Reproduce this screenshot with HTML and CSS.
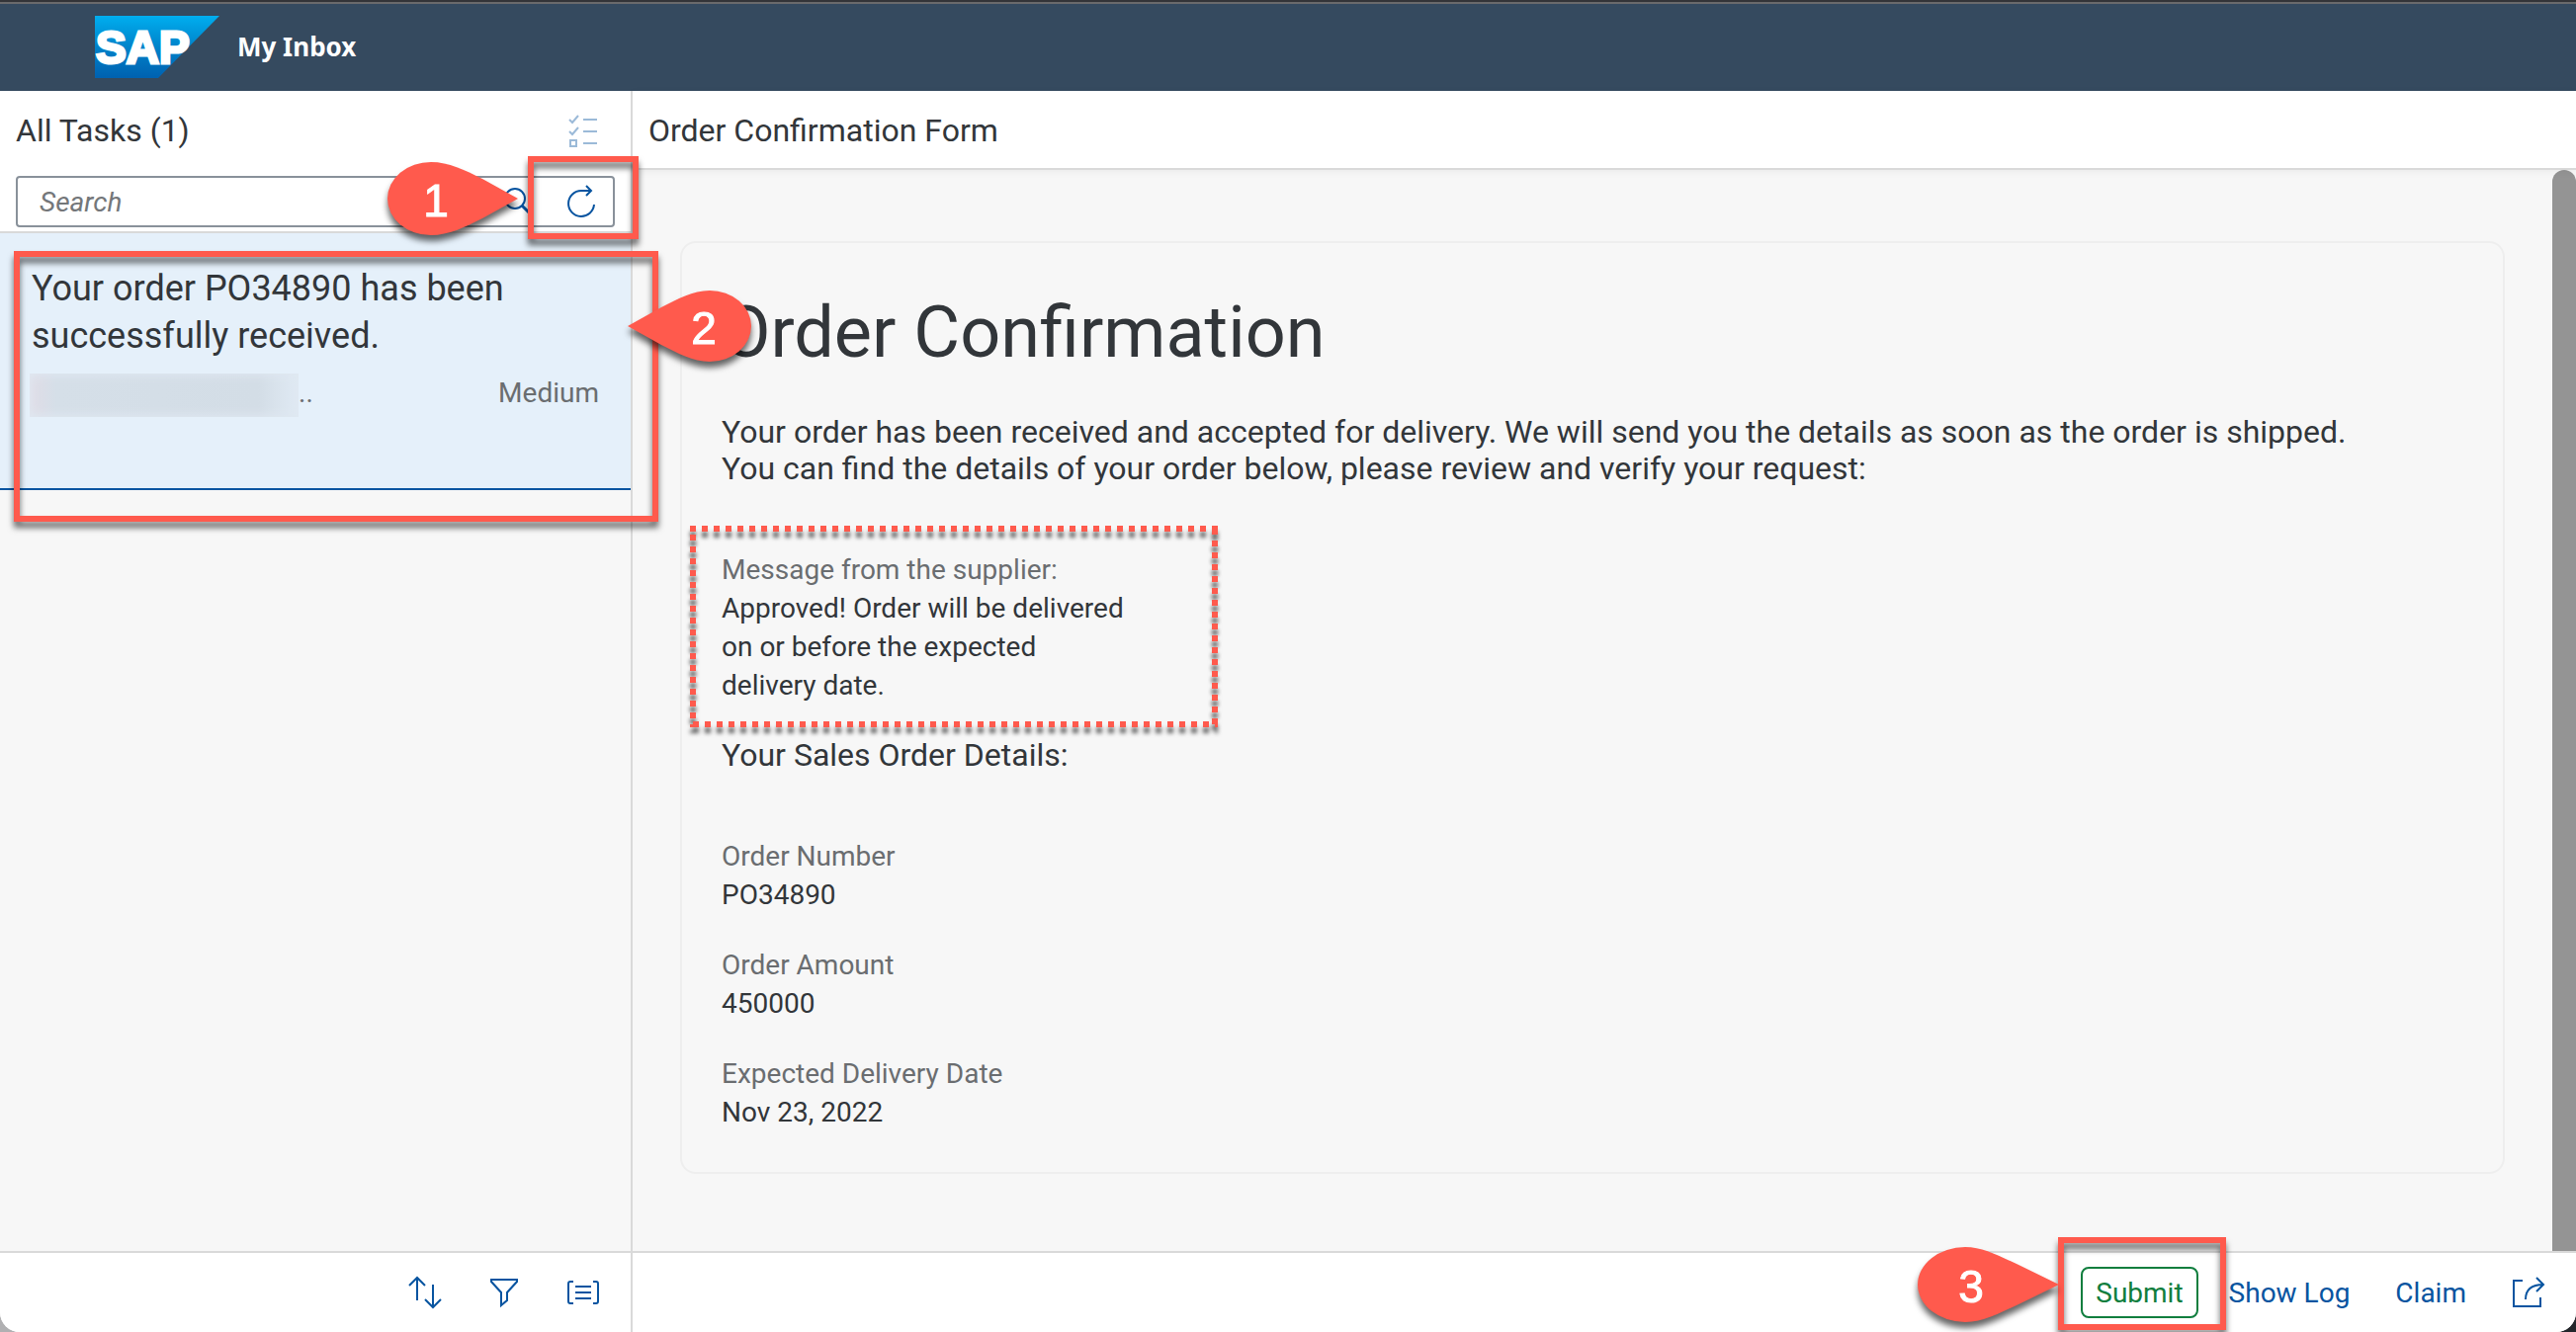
FILE: index.html
```html
<!DOCTYPE html>
<html lang="en">
<head>
<meta charset="utf-8">
<meta name="viewport" content="width=device-width, initial-scale=1">
<title>My Inbox</title>
<link rel="stylesheet" href="styles.css">
</head>
<body>
<div class="app">
  <header class="shell">
    <svg class="logo" viewBox="0 0 126 63" role="img" aria-label="SAP">
      <defs>
        <linearGradient id="logo-fill" x1="0" y1="0" x2="0" y2="1">
          <stop offset="0" stop-color="#00aeef"/>
          <stop offset="0.5" stop-color="#0083ca"/>
          <stop offset="1" stop-color="#0061b0"/>
        </linearGradient>
      </defs>
      <path d="M0 0H126L64 63H0Z" fill="url(#logo-fill)"/>
      <text class="logo-text" x="1" y="48">SAP</text>
    </svg>
    <h1 class="shell-title">My Inbox</h1>
  </header>

  <div class="panes">
    <aside class="list-pane">
      <div class="list-head">
        <h2 class="pane-title">All Tasks (1)</h2>
        <button class="icon-btn" type="button" aria-label="Select multiple" disabled>
          <svg class="icon" width="32" height="32" viewBox="0 0 32 32">
            <path d="M2 5l3 3 6-7M2 17l3 3 6-7M16 5h14M16 17h14M16 29h14M3 26h6v6H3z"/>
          </svg>
        </button>
      </div>
      <div class="search-bar">
        <div class="search-field">
          <input class="search-input" type="search" placeholder="Search" aria-label="Search">
          <button class="field-btn" type="button" aria-label="Search tasks">
            <svg class="icon" width="32" height="32" viewBox="0 0 32 32">
              <circle cx="13" cy="13" r="10"/><path d="M20 20l9 9" stroke-width="3"/>
            </svg>
          </button>
          <button class="field-btn" type="button" aria-label="Refresh">
            <svg class="icon" width="32" height="32" viewBox="0 0 32 32">
              <path d="M29 19A13 13 0 1 1 16 5H26M21 0l5 5-5 5"/>
            </svg>
          </button>
          <div class="mark mark-refresh"></div>
          <svg class="pin pin-one" width="132" height="74" viewBox="0 0 132 74">
            <path d="M44 0C62 0 78 8 96 17L132 37L96 57C78 66 62 74 44 74A44 37 0 0 1 44 0Z"/>
            <text x="49" y="55">1</text>
          </svg>
        </div>
      </div>
      <ul class="tasks">
        <li class="task">
          <h3 class="task-title">Your order PO34890 has been successfully received.</h3>
          <div class="task-meta">
            <span class="task-owner"><span class="redacted"></span>..</span>
            <span>Medium</span>
          </div>
          <div class="mark mark-task"></div>
          <svg class="pin pin-two" width="125" height="72" viewBox="0 0 125 72">
            <path d="M83 0C66 0 50 9 34 17L0 36L34 55C50 63 66 72 83 72A42 36 0 0 0 83 0Z"/>
            <text x="77" y="54">2</text>
          </svg>
        </li>
      </ul>
      <footer class="bar">
        <button class="icon-btn" type="button" aria-label="Sort">
          <svg class="icon" width="32" height="32" viewBox="0 0 32 32">
            <path d="M8 24V1M0 9l8-8 8 8M24 8v23M16 23l8 8 8-8"/>
          </svg>
        </button>
        <button class="icon-btn" type="button" aria-label="Filter">
          <svg class="icon" width="32" height="32" viewBox="0 0 32 32">
            <path d="M3 3H29V5L19 16V24L13 29V16L3 5Z"/>
          </svg>
        </button>
        <button class="icon-btn" type="button" aria-label="Group">
          <svg class="icon" width="34" height="32" viewBox="0 0 34 32">
            <path d="M7 5H4Q2 5 2 7V25Q2 27 4 27H7M27 5H30Q32 5 32 7V25Q32 27 30 27H27M9 10H25M9 16H25M9 22H25"/>
          </svg>
        </button>
      </footer>
    </aside>

    <main class="detail-pane">
      <div class="detail-head"><h2 class="pane-title">Order Confirmation Form</h2></div>
      <div class="detail-body">
        <section class="card">
          <h2 class="card-title">Order Confirmation</h2>
          <p class="intro">Your order has been received and accepted for delivery. We will send you the details as soon as the order is shipped.<br>You can find the details of your order below, please review and verify your request:</p>
          <div class="message">
            <dl>
              <dt>Message from the supplier:</dt>
              <dd>Approved! Order will be delivered on or before the expected delivery date.</dd>
            </dl>
            <svg class="dotted" width="534" height="204" viewBox="0 0 534 204">
              <path d="M0 3H534M3 9V204M531 3V204M3 201H534"/>
            </svg>
          </div>
          <h3 class="section-title">Your Sales Order Details:</h3>
          <dl class="fields">
            <div><dt>Order Number</dt><dd>PO34890</dd></div>
            <div><dt>Order Amount</dt><dd>450000</dd></div>
            <div><dt>Expected Delivery Date</dt><dd>Nov 23, 2022</dd></div>
          </dl>
        </section>
        <div class="scroll-track"><div class="scroll-thumb"></div></div>
      </div>
      <footer class="bar">
        <div class="submit-wrap">
          <button class="btn btn-accept" type="button">Submit</button>
          <div class="mark mark-submit"></div>
          <svg class="pin pin-three" width="143" height="76" viewBox="0 0 143 76">
            <path d="M48 0C66 0 82 9 100 17L143 38L100 59C82 67 66 76 48 76A48 38 0 0 1 48 0Z"/>
            <text x="54" y="56">3</text>
          </svg>
        </div>
        <button class="btn" type="button">Show Log</button>
        <button class="btn" type="button">Claim</button>
        <button class="icon-btn" type="button" aria-label="Share">
          <svg class="icon" width="34" height="32" viewBox="0 0 34 32">
            <path d="M11 4H2V30H29V21M14 23C14 12 21 8 32 8M25 1l7 7-7 7"/>
          </svg>
        </button>
      </footer>
    </main>
  </div>
</div>
</body>
</html>
```
FILE: styles.css
```css
* { box-sizing: border-box; }

body {
  margin: 0;
  background: linear-gradient(to right, #b0b0b2 50%, #23262b 50%);
  color: #32363a;
  font-family: Roboto, "Liberation Sans", sans-serif;
  font-size: 28px;
  line-height: 39px;
}

h1, h2, h3, p, dl, dd, ul { margin: 0; padding: 0; font-weight: 400; }
ul { list-style: none; }
button, input { font: inherit; color: inherit; background: none; border: 0; margin: 0; padding: 0; }

.app {
  display: flex;
  flex-direction: column;
  min-height: 100vh;
  border-radius: 0 0 20px 20px;
  background: #f7f7f7;
  overflow: hidden;
}

.shell {
  display: flex;
  align-items: center;
  gap: 18px;
  height: 92px;
  padding: 0 96px;
  border-top: 2px solid #333438;
  background: #354a5f;
  box-shadow: inset 0 2px #6a6a6c;
}
.logo { width: 126px; height: 63px; }
.logo-text {
  font: bold 46px "Liberation Sans", sans-serif;
  fill: #fff;
  stroke: #fff;
  stroke-width: 3px;
}
.shell-title {
  color: #fff;
  font-family: "Noto Sans", sans-serif;
  font-size: 26px;
  font-weight: 700;
}

.panes { flex: 1; display: flex; }

.list-pane {
  position: relative;
  z-index: 1;
  flex: 0 0 640px;
  display: flex;
  flex-direction: column;
  border-right: 2px solid #d9d9d9;
}
.list-head {
  display: flex;
  align-items: center;
  justify-content: space-between;
  height: 80px;
  padding: 0 16px;
  background: #fff;
}
.pane-title { font-size: 32px; line-height: 40px; }

.search-bar {
  position: relative;
  z-index: 1;
  padding: 6px 16px 4px;
  border-bottom: 2px solid #d9d9d9;
  background: #fff;
}
.search-field {
  position: relative;
  display: flex;
  height: 52px;
  border: 2px solid #89919a;
  border-radius: 4px;
}
.search-input { flex: 1; min-width: 0; padding: 0 22px; outline: 0; }
.search-input::placeholder { color: #74777a; font-style: italic; opacity: 1; }
.field-btn {
  display: grid;
  place-items: center;
  width: 64px;
}

.icon { fill: none; stroke: #0854a0; stroke-width: 2px; overflow: visible; }
.icon-btn {
  display: grid;
  place-items: center;
  width: 64px;
  height: 52px;
}
.icon-btn:disabled { opacity: 0.4; }

.tasks { flex: 1; }
.task {
  position: relative;
  min-height: 260px;
  padding: 32px 32px 0;
  border-bottom: 2px solid #0854a0;
  background: #e5f0fa;
}
.task-title { font-size: 36px; line-height: 48px; }
.task-meta {
  display: flex;
  justify-content: space-between;
  margin-top: 14px;
  color: #6a6d70;
}
.task-owner { display: flex; margin-left: -2px; }
.redacted {
  width: 272px;
  height: 44px;
  background: linear-gradient(to right, #e0dce6, #d5dfe8 10%, #d3dde6 85%, #e0eaf4);
  box-shadow: inset 0 0 10px 2px #dfe8f1;
}

.bar {
  display: flex;
  align-items: center;
  justify-content: flex-end;
  gap: 16px;
  height: 82px;
  padding: 0 16px;
  border-top: 2px solid #d9d9d9;
  background: #fff;
}

.detail-pane { flex: 1; min-width: 0; display: flex; flex-direction: column; }
.detail-head {
  position: relative;
  display: flex;
  align-items: center;
  height: 80px;
  padding: 2px 16px 0;
  border-bottom: 2px solid #d9d9d9;
  background: #fff;
  box-shadow: 0 2px 8px rgba(0, 0, 0, 0.05);
}
.detail-body { flex: 1; display: flex; align-items: flex-start; }
.card {
  flex: 1;
  margin: 72px 48px;
  padding: 47px 40px 41px;
  border: 2px solid #eee;
  border-radius: 16px;
}
.card-title { font-size: 72px; line-height: 88px; }
.intro { margin-top: 38px; font-size: 32px; line-height: 37px; }

dt { color: #6a6d70; }
.message { position: relative; margin-top: 64px; }
.message dd { max-width: 416px; }
.section-title { margin-top: 32px; font-size: 32px; line-height: 38px; }
.fields { display: grid; gap: 32px; margin-top: 64px; }

.scroll-track { align-self: stretch; width: 24px; display: flex; }
.scroll-thumb { flex: 1; border-radius: 12px 12px 0 0; background: #949494; }

.btn {
  height: 52px;
  padding: 0 13px;
  border: 2px solid transparent;
  border-radius: 8px;
  color: #0854a0;
}
.btn-accept { border-color: #107e3e; color: #107e3e; }
.submit-wrap { position: relative; }

/* Callouts laid over the page */
.mark {
  position: absolute;
  border: 6px solid #ff5a4d;
  filter: drop-shadow(0 6px 3px rgba(0, 0, 0, 0.6));
  pointer-events: none;
}
.mark-refresh { top: -22px; right: -26px; width: 112px; height: 84px; }
.mark-task { top: 18px; left: 14px; right: -28px; height: 274px; }
.mark-submit { top: -30px; right: -28px; width: 170px; height: 94px; }

.pin {
  position: absolute;
  fill: #ff5a4d;
  overflow: visible;
  filter: drop-shadow(0 6px 3px rgba(0, 0, 0, 0.6));
  pointer-events: none;
}
.pin text {
  font: 46px "Liberation Sans", sans-serif;
  fill: #fff;
  stroke: #fff;
  stroke-width: 1px;
  text-anchor: middle;
}
.pin-one { top: -16px; right: 96px; }
.pin-two { top: 58px; right: -122px; }
.pin-three { top: -20px; right: 141px; }

.dotted {
  position: absolute;
  top: -25px;
  left: -32px;
  fill: none;
  stroke: #ff5a4d;
  stroke-width: 6px;
  stroke-dasharray: 6 6;
  overflow: visible;
  filter: drop-shadow(0 6px 2px rgba(0, 0, 0, 0.6));
  pointer-events: none;
}
```
